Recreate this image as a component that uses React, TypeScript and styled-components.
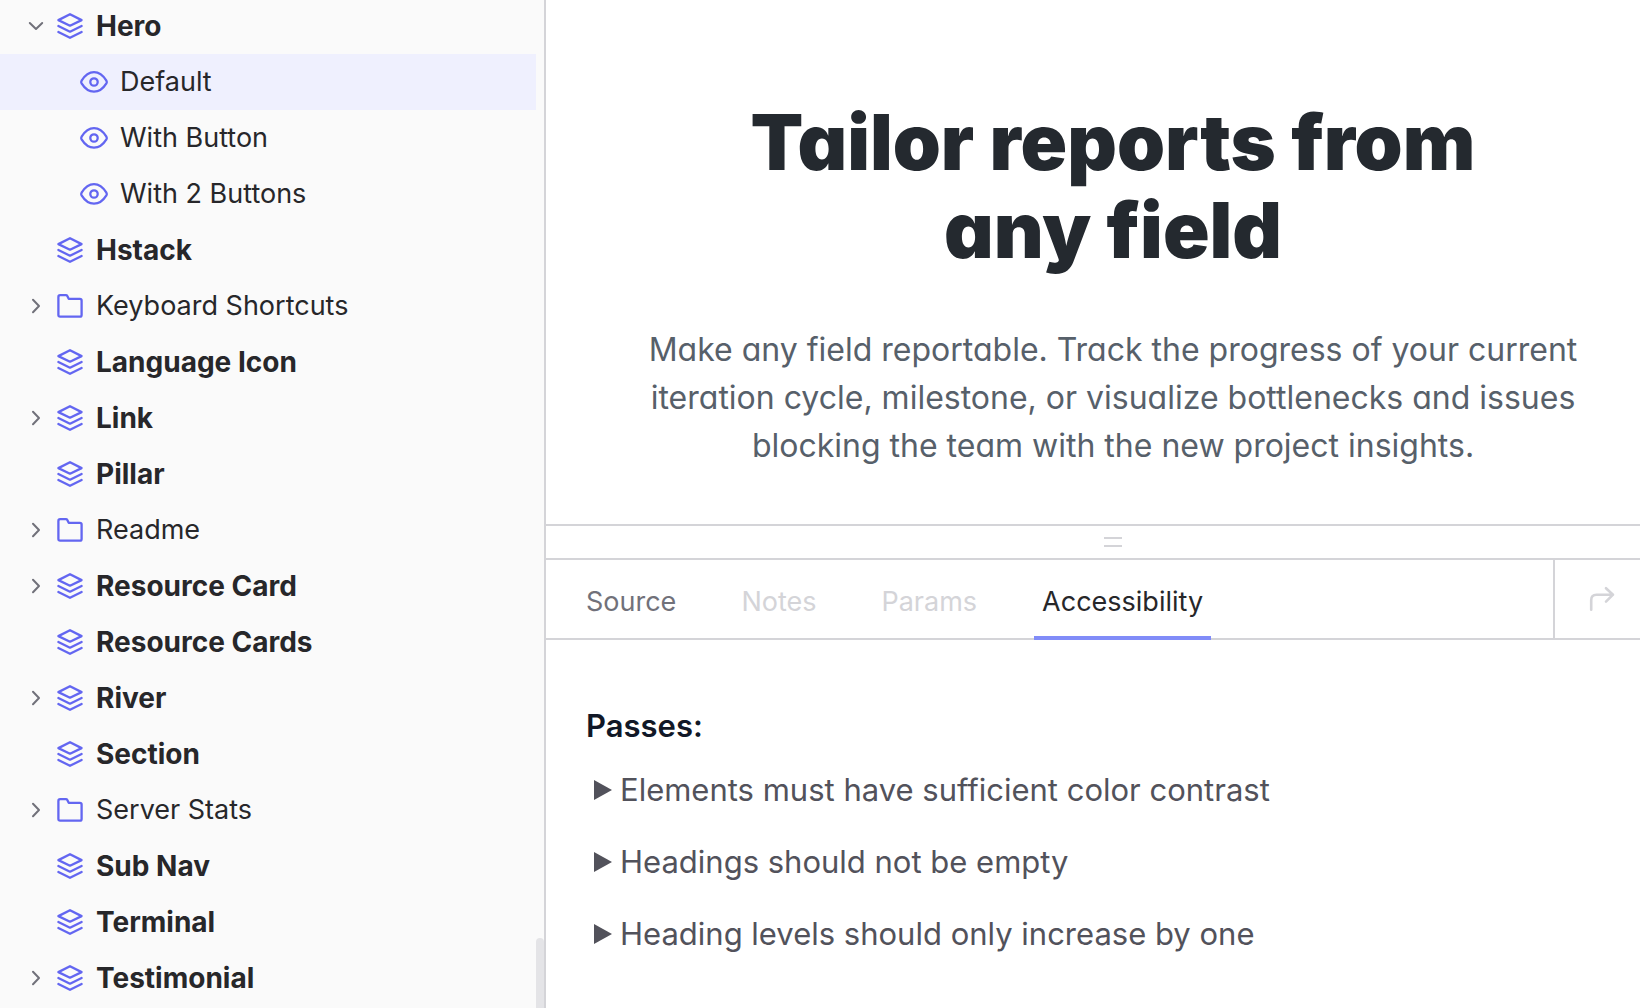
import React from "react";
import styled, { createGlobalStyle, css } from "styled-components";

const GlobalStyle = createGlobalStyle`
  *, *::before, *::after { box-sizing: border-box; }
  body {
    margin: 0;
    background: #ffffff;
    font-family: Inter, "Liberation Sans", sans-serif;
    -webkit-font-smoothing: antialiased;
  }
`;

const line = "#d4d4d8";
const accent = "#6366f1";

const Page = styled.div`
  display: flex;
  height: 100vh;
  overflow: hidden;
`;

const Sidebar = styled.aside`
  position: relative;
  flex: 0 0 546px;
  overflow: hidden;
  padding-right: 8px;
  border-right: 2px solid ${line};
  background: #fafafa;
`;

const ScrollThumb = styled.div`
  position: absolute;
  right: 0;
  bottom: 0;
  width: 8px;
  height: 70px;
  border-radius: 4px 4px 0 0;
  background: #e4e4e7;
`;

const Tree = styled.ul`
  margin: -2px 0 0;
  padding: 0;
  list-style: none;
`;

const Branch = styled.ul`
  margin: 0;
  padding: 0;
  list-style: none;
`;

const rowStyle = css<{ $strong?: boolean; $active?: boolean; $nested?: boolean }>`
  display: flex;
  align-items: center;
  gap: 12px;
  width: 100%;
  height: 56px;
  margin: 0;
  padding: 0 16px 0 ${(p) => (p.$nested ? 80 : 56)}px;
  border: 0;
  background: ${(p) => (p.$active ? "#eff0fe" : "transparent")};
  color: #27272a;
  font: ${(p) => (p.$strong ? "700 28px" : "400 27px")}/36px Inter, "Liberation Sans", sans-serif;
  text-align: left;
  text-decoration: none;
  cursor: pointer;
`;

const RowLink = styled.a<{ $strong?: boolean; $active?: boolean; $nested?: boolean }>`
  ${rowStyle}
`;

const RowButton = styled.button<{ $strong?: boolean; $active?: boolean; $nested?: boolean }>`
  ${rowStyle}
  gap: 8px;
  padding-left: 24px;

  svg + svg {
    margin-right: 4px;
  }
`;

const Glyph = styled.svg<{ $size: number }>`
  flex: none;
  width: ${(p) => p.$size}px;
  height: ${(p) => p.$size}px;
  fill: none;
  stroke: ${accent};
  stroke-width: 2.3;
  stroke-linecap: round;
  stroke-linejoin: round;
`;

const Caret = styled(Glyph)`
  stroke: #71717a;
  stroke-width: 2;
`;

const LayersIcon = () => (
  <Glyph $size={28} viewBox="0 0 28 28" aria-hidden="true">
    <path d="M14 2.2 L25.6 8.1 L14 13.7 L2.4 8.1 Z" />
    <path d="M2.4 14 L14 19.7 L25.6 14" />
    <path d="M2.4 20 L14 25.8 L25.6 20" />
  </Glyph>
);

const FolderIcon = () => (
  <Glyph $size={28} viewBox="0 0 28 28" aria-hidden="true">
    <path d="M4.2 3.2 H9.9 Q10.9 3.2 11.3 4 L12.7 6.8 H23.9 Q25.6 6.8 25.6 8.5 V22.9 Q25.6 24.6 23.9 24.6 H4.1 Q2.4 24.6 2.4 22.9 V4.9 Q2.4 3.2 4.2 3.2 Z" />
  </Glyph>
);

const EyeIcon = () => (
  <Glyph $size={28} viewBox="0 0 28 28" aria-hidden="true">
    <path d="M14 4.2 C20 4.2 23.6 8.2 26.4 12.7 Q27.1 14 26.4 15.3 C23.6 19.8 20 23.6 14 23.6 C8 23.6 4.4 19.8 1.6 15.3 Q0.9 14 1.6 12.7 C4.4 8.2 8 4.2 14 4.2 Z" />
    <circle cx="14" cy="14" r="3.7" />
  </Glyph>
);

const ChevronRight = () => (
  <Caret $size={24} viewBox="0 0 24 24" aria-hidden="true">
    <path d="M9 5.8 L15 12 L9 18.2" />
  </Caret>
);

const ChevronDown = () => (
  <Caret $size={24} viewBox="0 0 24 24" aria-hidden="true">
    <path d="M5.8 9 L12 15 L18.2 9" />
  </Caret>
);

const Main = styled.main`
  display: flex;
  flex: 1;
  flex-direction: column;
  min-width: 0;
`;

const Preview = styled.section`
  display: flex;
  flex: none;
  flex-direction: column;
  align-items: center;
  gap: 52px;
  padding: 98px 40px 54px 80px;
  text-align: center;
  font-feature-settings: "cv11" 1;
`;

const Title = styled.h1`
  max-width: 800px;
  margin: 0;
  color: #24292f;
  font-size: 77px;
  font-weight: 900;
  line-height: 88px;
`;

const Lead = styled.p`
  max-width: 940px;
  margin: 0;
  color: #57606a;
  font-size: 32px;
  line-height: 48px;
`;

const DragBar = styled.div`
  display: flex;
  flex: none;
  flex-direction: column;
  align-items: center;
  justify-content: center;
  gap: 6px;
  height: 36px;
  padding-left: 40px;
  border-top: 2px solid ${line};
  border-bottom: 2px solid ${line};
`;

const Grip = styled.span`
  width: 18px;
  height: 2px;
  background: ${line};
`;

const TabBar = styled.div`
  display: flex;
  flex: none;
  height: 80px;
  border-bottom: 2px solid ${line};
`;

const TabList = styled.div`
  display: flex;
  flex: 1;
  gap: 49px;
  padding-left: 32px;
`;

const Tab = styled.button<{ $active?: boolean }>`
  height: 80px;
  padding: 8px 8px 0;
  border: 0;
  border-bottom: 4px solid ${(p) => (p.$active ? "#818cf8" : "transparent")};
  background: transparent;
  color: ${(p) => (p.$active ? "#27272a" : "#71717a")};
  font: 400 27px/36px Inter, "Liberation Sans", sans-serif;
  cursor: pointer;

  &:disabled {
    color: ${line};
    cursor: default;
  }
`;

const OpenButton = styled.button`
  display: flex;
  align-items: center;
  justify-content: center;
  width: 87px;
  padding: 0 0 0 8px;
  border: 0;
  border-left: 2px solid ${line};
  background: transparent;
`;

const OpenGlyph = styled(Glyph)`
  stroke: ${line};
  stroke-width: 2.6;
`;

const Results = styled.section`
  padding: 66px 40px;
`;

const ResultsTitle = styled.h2`
  margin: 0 0 20px;
  color: #111827;
  font-size: 31px;
  font-weight: 600;
  line-height: 40px;
`;

const Rule = styled.details`
  margin-bottom: 24px;
  color: #52525b;
  font-size: 31px;
  line-height: 48px;
`;

const RuleSummary = styled.summary`
  display: flex;
  align-items: center;
  gap: 8px;
  padding-left: 8px;
  cursor: pointer;

  &::before {
    content: "";
    border-style: solid;
    border-width: 10px 0 10px 18px;
    border-color: transparent transparent transparent #52525b;
  }
`;

type Entry = {
  label: string;
  kind: "component" | "folder";
  state?: "open" | "closed";
  children?: string[];
};

const entries: Entry[] = [
  { label: "Hero", kind: "component", state: "open", children: ["Default", "With Button", "With 2 Buttons"] },
  { label: "Hstack", kind: "component" },
  { label: "Keyboard Shortcuts", kind: "folder", state: "closed" },
  { label: "Language Icon", kind: "component" },
  { label: "Link", kind: "component", state: "closed" },
  { label: "Pillar", kind: "component" },
  { label: "Readme", kind: "folder", state: "closed" },
  { label: "Resource Card", kind: "component", state: "closed" },
  { label: "Resource Cards", kind: "component" },
  { label: "River", kind: "component", state: "closed" },
  { label: "Section", kind: "component" },
  { label: "Server Stats", kind: "folder", state: "closed" },
  { label: "Sub Nav", kind: "component" },
  { label: "Terminal", kind: "component" },
  { label: "Testimonial", kind: "component", state: "closed" },
];

const tabs = [
  { label: "Source" },
  { label: "Notes", disabled: true },
  { label: "Params", disabled: true },
  { label: "Accessibility", active: true },
];

const rules = [
  "Elements must have sufficient color contrast",
  "Headings should not be empty",
  "Heading levels should only increase by one",
];

const TreeEntry = ({ label, kind, state, children }: Entry) => {
  const icon = kind === "folder" ? <FolderIcon /> : <LayersIcon />;
  const strong = kind === "component";
  return (
    <li>
      {state ? (
        <RowButton type="button" $strong={strong} aria-expanded={state === "open"}>
          {state === "open" ? <ChevronDown /> : <ChevronRight />}
          {icon}
          {label}
        </RowButton>
      ) : (
        <RowLink href="#" $strong={strong}>
          {icon}
          {label}
        </RowLink>
      )}
      {children && (
        <Branch>
          {children.map((child, i) => (
            <li key={child}>
              <RowLink href="#" $nested $active={i === 0} aria-current={i === 0 ? "page" : undefined}>
                <EyeIcon />
                {child}
              </RowLink>
            </li>
          ))}
        </Branch>
      )}
    </li>
  );
};

export default function App() {
  return (
    <>
      <GlobalStyle />
      <Page>
        <Sidebar>
          <nav aria-label="Components">
            <Tree>
              {entries.map((entry) => (
                <TreeEntry key={entry.label} {...entry} />
              ))}
            </Tree>
          </nav>
          <ScrollThumb />
        </Sidebar>
        <Main>
          <Preview>
            <Title>Tailor reports from any field</Title>
            <Lead>
              Make any field reportable. Track the progress of your current iteration cycle,
              milestone, or visualize bottlenecks and issues blocking the team with the new
              project insights.
            </Lead>
          </Preview>
          <DragBar role="separator" aria-orientation="horizontal">
            <Grip />
            <Grip />
          </DragBar>
          <TabBar>
            <TabList role="tablist">
              {tabs.map((tab) => (
                <Tab
                  key={tab.label}
                  type="button"
                  role="tab"
                  $active={tab.active}
                  aria-selected={!!tab.active}
                  disabled={tab.disabled}
                >
                  {tab.label}
                </Tab>
              ))}
            </TabList>
            <OpenButton type="button" aria-label="Open in a new view">
              <OpenGlyph $size={28} viewBox="0 0 28 28">
                <path d="M3.2 24.8 V15 Q3.2 9.7 8.5 9.7 H25 M18 3.2 L25 9.7 L18 16.7" />
              </OpenGlyph>
            </OpenButton>
          </TabBar>
          <Results>
            <ResultsTitle>Passes:</ResultsTitle>
            {rules.map((rule) => (
              <Rule key={rule}>
                <RuleSummary>{rule}</RuleSummary>
              </Rule>
            ))}
          </Results>
        </Main>
      </Page>
    </>
  );
}
